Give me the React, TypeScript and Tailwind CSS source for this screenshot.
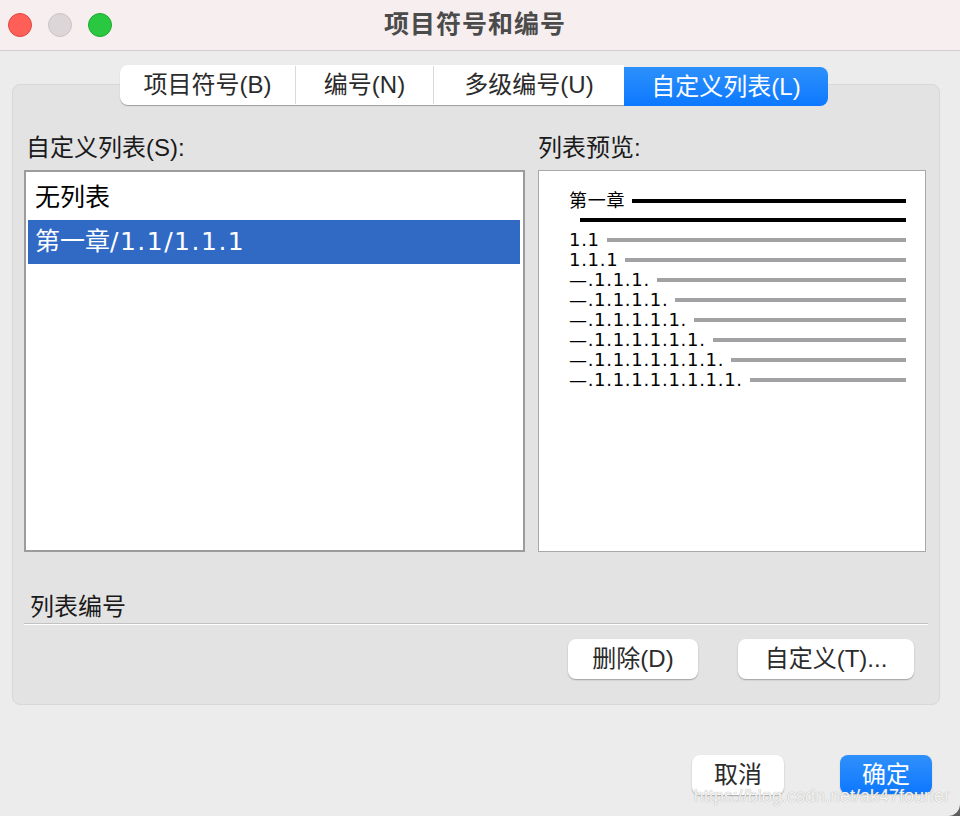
const previewRows = [
  '1.1',
  '1.1.1',
  '—.1.1.1.',
  '—.1.1.1.1.',
  '—.1.1.1.1.1.',
  '—.1.1.1.1.1.1.',
  '—.1.1.1.1.1.1.1.',
  '—.1.1.1.1.1.1.1.1.',
]

export default function App() {
  return (
    <div className="w-[960px] h-[816px] bg-[#5f5f5f] overflow-hidden font-['Liberation_Sans','Noto_Sans_CJK_SC',sans-serif]">
      <div className="relative h-full bg-[#ececec] rounded-br-[12px] flex flex-col">
        {/* title bar */}
        <div className="h-[51px] shrink-0 bg-[#f7eef0] border-b border-[#d2cdce] grid grid-cols-[1fr_auto_1fr] items-center pr-[10px]">
          <div className="flex items-center gap-[16px] pl-[8px]">
            <span className="w-[24px] h-[24px] rounded-full bg-[#fe5f57] border border-[#e2463f]" />
            <span className="w-[24px] h-[24px] rounded-full bg-[#ddd6d8] border border-[#cbc4c6]" />
            <span className="w-[24px] h-[24px] rounded-full bg-[#2ac840] border border-[#1faa31]" />
          </div>
          <div className="text-[25px] font-semibold text-[#4b4b4b] tracking-[1px]">项目符号和编号</div>
          <div />
        </div>

        <div className="px-[12px] pt-[14px] flex flex-col">
          {/* tabs */}
          <div className="relative z-10 ml-[108px] flex h-[40px] text-[24px]">
            <div className="flex rounded-l-[8px] bg-white shadow-[0_1px_1px_rgba(0,0,0,0.3)]">
              <div className="w-[176px] flex items-center justify-center text-[#2b2b2b] border-r border-[#d9d9d9] my-[1px]">项目符号(B)</div>
              <div className="w-[138px] flex items-center justify-center text-[#2b2b2b] border-r border-[#d9d9d9] my-[1px]">编号(N)</div>
              <div className="w-[190px] flex items-center justify-center text-[#2b2b2b]">多级编号(U)</div>
            </div>
            <div className="w-[204px] mt-[2px] h-[39px] flex items-center justify-center text-white rounded-r-[8px] bg-gradient-to-b from-[#2c90fb] to-[#0a78ff]">
              自定义列表(L)
            </div>
          </div>

          {/* group panel */}
          <div className="-mt-[21px] w-[928px] h-[621px] bg-[#e3e3e3] border border-[#d8d8d8] rounded-[8px] pt-[47px] px-[11px] flex flex-col">
            <div className="flex gap-[13px]">
              <div className="w-[501px] flex flex-col">
                <div className="h-[32px] leading-[32px] text-[24px] text-[#1a1a1a] pl-[2px]">自定义列表(S):</div>
                <div className="mt-[6px] h-[382px] border-2 border-[#9c9c9c] bg-white pt-[4px] pl-[2px] pr-[3px] font-['DejaVu_Sans','Noto_Sans_CJK_SC',sans-serif] text-[25px]">
                  <div className="h-[44px] flex items-center pl-[7px] text-black">无列表</div>
                  <div className="h-[44px] flex items-center pl-[7px] bg-[#316ac5] text-white">
                    第一章<span className="tracking-[1.5px]">/1.1/1.1.1</span>
                  </div>
                </div>
              </div>
              <div className="w-[388px] flex flex-col">
                <div className="h-[32px] leading-[32px] text-[24px] text-[#1a1a1a]">列表预览:</div>
                <div className="mt-[6px] h-[382px] border border-[#a8a8a8] bg-white pt-[20px] pl-[30px] pr-[19px] font-['DejaVu_Sans','Noto_Sans_CJK_SC',sans-serif] text-[18px] tracking-[0.7px] text-black">
                  <div className="h-[20px] flex items-center gap-[7px]">
                    <span className="whitespace-nowrap leading-[20px]">第一章</span>
                    <div className="flex-1 h-[4px] bg-black" />
                  </div>
                  <div className="ml-[11px] mt-[7px] mb-[8px] h-[4px] bg-black" />
                  {previewRows.map((r) => (
                    <div key={r} className="h-[20px] flex items-center gap-[7px]">
                      <span className="whitespace-nowrap leading-[20px]">{r}</span>
                      <div className="flex-1 h-[4px] bg-[#a2a2a4]" />
                    </div>
                  ))}
                </div>
              </div>
            </div>

            <div className="mt-[39px] h-[32px] leading-[32px] text-[24px] text-[#1a1a1a] pl-[6px]">列表编号</div>
            <div className="h-px bg-[#c2c2c2]" />
            <div className="h-px bg-white" />

            <div className="mt-[14px] flex justify-end gap-[40px] pr-[14px]">
              <button className="w-[130px] h-[40px] rounded-[8px] bg-white text-[24px] text-[#2b2b2b] shadow-[0_1px_1.5px_rgba(0,0,0,0.3)]">删除(D)</button>
              <button className="w-[176px] h-[40px] rounded-[8px] bg-white text-[24px] text-[#2b2b2b] shadow-[0_1px_1.5px_rgba(0,0,0,0.3)]">自定义(T)...</button>
            </div>
          </div>

          {/* dialog buttons */}
          <div className="mt-[50px] flex justify-end gap-[56px] pr-[16px]">
            <button className="w-[92px] h-[40px] rounded-[8px] bg-white text-[24px] text-[#2b2b2b] shadow-[0_1px_1.5px_rgba(0,0,0,0.3)]">取消</button>
            <button className="w-[92px] h-[39px] rounded-[8px] bg-gradient-to-b from-[#2f90fb] to-[#0a77ff] text-[24px] text-white shadow-[0_1px_1.5px_rgba(0,0,0,0.2)]">确定</button>
          </div>
        </div>

        <div className="absolute right-[10px] bottom-[6px] text-[18px] text-[#f3f3f3] [text-shadow:0_0_1px_#9a9a9a] font-['Liberation_Sans',sans-serif]">
          https://blog.csdn.net/ak47fourier
        </div>
      </div>
    </div>
  )
}
